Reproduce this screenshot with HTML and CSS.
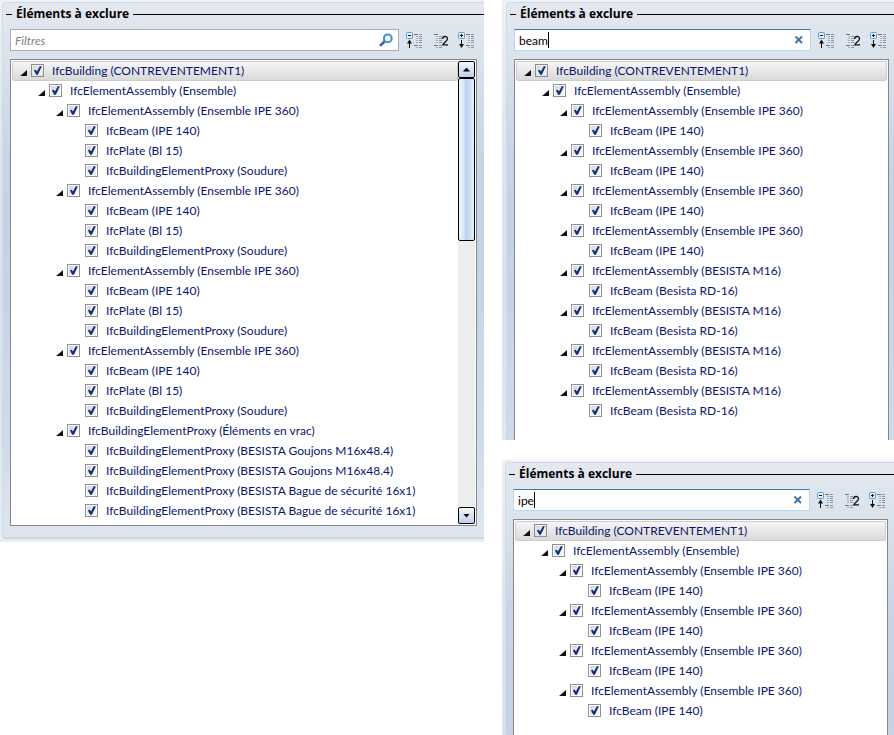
FILE: index.html
```html
<!DOCTYPE html>
<html lang="fr">
<head>
<meta charset="utf-8">
<title>Éléments à exclure</title>
<link rel="stylesheet" href="styles.css">
</head>
<body>
<svg class="defs" aria-hidden="true">
  <defs>
    <g id="lines" fill="none" stroke-width="1">
      <path d="M8 2.5h4M8 13.5h4" stroke="#6d7480"/>
      <path d="M10 4.5h2M10 6.5h2M10 8.5h2M10 10.5h2" stroke="#a3acba"/>
      <path d="M13 2.500h3M13 4.5h3M13 6.5h3M13 8.5h3M13 10.5h3M13 13.5h3M13 15.5h3" stroke="#8797a5"/>
      <path d="M10 15.5h2" stroke="#a3acba"/>
    </g>
    <symbol id="collapse" viewBox="0 -1 18 18">
      <rect x="0.5" y="0.5" width="6" height="6" rx="1" fill="#e4f0fa" stroke="#5c9bd3"/>
      <path d="M2 3.5h3" stroke="#111"/>
      <path d="M3.5 9v7" stroke="#111"/><path d="M3.5 7.5L6 11.5H1z" fill="#111"/>
      <use href="#lines"/>
    </symbol>
    <symbol id="level" viewBox="0 -1 18 18">
      <path d="M2 2.5h4M2 13.5h4" stroke="#6d7480"/>
      <path d="M4 4.5h2M4 6.5h2M4 8.5h2M4 10.5h2M4 15.5h2" stroke="#a3acba"/>
      <path d="M7 4.5h3M7 6.5h3M7 8.5h3M7 10.5h3M7 13.5h3M7 15.5h3" stroke="#8797a5"/>
      <path d="M10.6 7C10.6 3.700 15.500 3.700 15.500 6.700C15.500 9 11.400 10.500 10.800 12.900H16" fill="none" stroke="#111" stroke-width="1.300"/>
    </symbol>
    <symbol id="expand" viewBox="0 -1 18 18">
      <rect x="0.5" y="0.5" width="6" height="6" rx="1" fill="#e4f0fa" stroke="#5c9bd3"/>
      <path d="M2 3.5h3M3.5 2v3" stroke="#111"/>
      <path d="M3.5 8v6" stroke="#111"/><path d="M3.5 16L6 12H1z" fill="#111"/>
      <use href="#lines"/>
    </symbol>
    <symbol id="search" viewBox="0 0 14 14">
      <path d="M1.800 12.200L6 8" stroke="#3a5fb0" stroke-width="2.600" stroke-linecap="round"/>
      <circle cx="8.800" cy="5.400" r="3.900" fill="#f4faff" stroke="#3c8fd0" stroke-width="2"/>
    </symbol>
    <symbol id="clear" viewBox="0 0 14 14">
      <path d="M4.500 3.500l6.500 6.500M11 3.500L4.500 10" stroke="#3f72a4" stroke-width="1.800"/>
    </symbol>
  </defs>
</svg>

<main class="board">
  <section class="panel panel-full">
    <div class="group">
      <h2 class="title">Éléments à exclure</h2>
      <div class="toolbar">
        <div class="filter">
          <input type="text" class="filter-input" placeholder="Filtres" aria-label="Filtres">
          <button class="icon-btn"><svg class="glyph"><use href="#search"/></svg></button>
        </div>
        <button class="tool"><svg><use href="#collapse"/></svg></button>
        <button class="tool"><svg><use href="#level"/></svg></button>
        <button class="tool"><svg><use href="#expand"/></svg></button>
      </div>
      <div class="tree">
        <ul class="list">
          <li><div class="row selected"><button class="twisty"></button><label><input type="checkbox" checked>IfcBuilding (CONTREVENTEMENT1)</label></div>
            <ul>
              <li><div class="row"><button class="twisty"></button><label><input type="checkbox" checked>IfcElementAssembly (Ensemble)</label></div>
                <ul>
                  <li><div class="row"><button class="twisty"></button><label><input type="checkbox" checked>IfcElementAssembly (Ensemble IPE 360)</label></div>
                    <ul>
                      <li class="row leaf"><label><input type="checkbox" checked>IfcBeam (IPE 140)</label></li>
                      <li class="row leaf"><label><input type="checkbox" checked>IfcPlate (Bl 15)</label></li>
                      <li class="row leaf"><label><input type="checkbox" checked>IfcBuildingElementProxy (Soudure)</label></li>
                    </ul>
                  </li>
                  <li><div class="row"><button class="twisty"></button><label><input type="checkbox" checked>IfcElementAssembly (Ensemble IPE 360)</label></div>
                    <ul>
                      <li class="row leaf"><label><input type="checkbox" checked>IfcBeam (IPE 140)</label></li>
                      <li class="row leaf"><label><input type="checkbox" checked>IfcPlate (Bl 15)</label></li>
                      <li class="row leaf"><label><input type="checkbox" checked>IfcBuildingElementProxy (Soudure)</label></li>
                    </ul>
                  </li>
                  <li><div class="row"><button class="twisty"></button><label><input type="checkbox" checked>IfcElementAssembly (Ensemble IPE 360)</label></div>
                    <ul>
                      <li class="row leaf"><label><input type="checkbox" checked>IfcBeam (IPE 140)</label></li>
                      <li class="row leaf"><label><input type="checkbox" checked>IfcPlate (Bl 15)</label></li>
                      <li class="row leaf"><label><input type="checkbox" checked>IfcBuildingElementProxy (Soudure)</label></li>
                    </ul>
                  </li>
                  <li><div class="row"><button class="twisty"></button><label><input type="checkbox" checked>IfcElementAssembly (Ensemble IPE 360)</label></div>
                    <ul>
                      <li class="row leaf"><label><input type="checkbox" checked>IfcBeam (IPE 140)</label></li>
                      <li class="row leaf"><label><input type="checkbox" checked>IfcPlate (Bl 15)</label></li>
                      <li class="row leaf"><label><input type="checkbox" checked>IfcBuildingElementProxy (Soudure)</label></li>
                    </ul>
                  </li>
                  <li><div class="row"><button class="twisty"></button><label><input type="checkbox" checked>IfcBuildingElementProxy (Éléments en vrac)</label></div>
                    <ul>
                      <li class="row leaf"><label><input type="checkbox" checked>IfcBuildingElementProxy (BESISTA Goujons M16x48.4)</label></li>
                      <li class="row leaf"><label><input type="checkbox" checked>IfcBuildingElementProxy (BESISTA Goujons M16x48.4)</label></li>
                      <li class="row leaf"><label><input type="checkbox" checked>IfcBuildingElementProxy (BESISTA Bague de sécurité 16x1)</label></li>
                      <li class="row leaf"><label><input type="checkbox" checked>IfcBuildingElementProxy (BESISTA Bague de sécurité 16x1)</label></li>
                    </ul>
                  </li>
                </ul>
              </li>
            </ul>
          </li>
        </ul>
        <div class="scrollbar">
          <button class="scroll-btn up"></button>
          <div class="track"><div class="thumb"></div></div>
          <button class="scroll-btn down"></button>
        </div>
      </div>
    </div>
  </section>

  <div class="column">
    <section class="panel panel-cut">
      <div class="group">
        <h2 class="title">Éléments à exclure</h2>
        <div class="toolbar">
          <div class="filter active">
            <input type="text" class="filter-input" value="beam" aria-label="Filtres" autofocus>
            <button class="icon-btn"><svg class="glyph"><use href="#clear"/></svg></button>
            <span class="caret-line" aria-hidden="true"><span class="typed">beam</span></span>
          </div>
          <button class="tool"><svg><use href="#collapse"/></svg></button>
          <button class="tool"><svg><use href="#level"/></svg></button>
          <button class="tool"><svg><use href="#expand"/></svg></button>
        </div>
        <div class="tree">
          <ul class="list">
            <li><div class="row selected"><button class="twisty"></button><label><input type="checkbox" checked>IfcBuilding (CONTREVENTEMENT1)</label></div>
              <ul>
                <li><div class="row"><button class="twisty"></button><label><input type="checkbox" checked>IfcElementAssembly (Ensemble)</label></div>
                  <ul>
                    <li><div class="row"><button class="twisty"></button><label><input type="checkbox" checked>IfcElementAssembly (Ensemble IPE 360)</label></div>
                      <ul><li class="row leaf"><label><input type="checkbox" checked>IfcBeam (IPE 140)</label></li></ul></li>
                    <li><div class="row"><button class="twisty"></button><label><input type="checkbox" checked>IfcElementAssembly (Ensemble IPE 360)</label></div>
                      <ul><li class="row leaf"><label><input type="checkbox" checked>IfcBeam (IPE 140)</label></li></ul></li>
                    <li><div class="row"><button class="twisty"></button><label><input type="checkbox" checked>IfcElementAssembly (Ensemble IPE 360)</label></div>
                      <ul><li class="row leaf"><label><input type="checkbox" checked>IfcBeam (IPE 140)</label></li></ul></li>
                    <li><div class="row"><button class="twisty"></button><label><input type="checkbox" checked>IfcElementAssembly (Ensemble IPE 360)</label></div>
                      <ul><li class="row leaf"><label><input type="checkbox" checked>IfcBeam (IPE 140)</label></li></ul></li>
                    <li><div class="row"><button class="twisty"></button><label><input type="checkbox" checked>IfcElementAssembly (BESISTA M16)</label></div>
                      <ul><li class="row leaf"><label><input type="checkbox" checked>IfcBeam (Besista RD-16)</label></li></ul></li>
                    <li><div class="row"><button class="twisty"></button><label><input type="checkbox" checked>IfcElementAssembly (BESISTA M16)</label></div>
                      <ul><li class="row leaf"><label><input type="checkbox" checked>IfcBeam (Besista RD-16)</label></li></ul></li>
                    <li><div class="row"><button class="twisty"></button><label><input type="checkbox" checked>IfcElementAssembly (BESISTA M16)</label></div>
                      <ul><li class="row leaf"><label><input type="checkbox" checked>IfcBeam (Besista RD-16)</label></li></ul></li>
                    <li><div class="row"><button class="twisty"></button><label><input type="checkbox" checked>IfcElementAssembly (BESISTA M16)</label></div>
                      <ul><li class="row leaf"><label><input type="checkbox" checked>IfcBeam (Besista RD-16)</label></li></ul></li>
                  </ul>
                </li>
              </ul>
            </li>
          </ul>
        </div>
      </div>
    </section>

    <section class="panel panel-cut panel-narrow">
      <div class="group">
        <h2 class="title">Éléments à exclure</h2>
        <div class="toolbar">
          <div class="filter active">
            <input type="text" class="filter-input" value="ipe" aria-label="Filtres">
            <button class="icon-btn"><svg class="glyph"><use href="#clear"/></svg></button>
            <span class="caret-line" aria-hidden="true"><span class="typed">ipe</span></span>
          </div>
          <button class="tool"><svg><use href="#collapse"/></svg></button>
          <button class="tool"><svg><use href="#level"/></svg></button>
          <button class="tool"><svg><use href="#expand"/></svg></button>
        </div>
        <div class="tree">
          <ul class="list">
            <li><div class="row selected"><button class="twisty"></button><label><input type="checkbox" checked>IfcBuilding (CONTREVENTEMENT1)</label></div>
              <ul>
                <li><div class="row"><button class="twisty"></button><label><input type="checkbox" checked>IfcElementAssembly (Ensemble)</label></div>
                  <ul>
                    <li><div class="row"><button class="twisty"></button><label><input type="checkbox" checked>IfcElementAssembly (Ensemble IPE 360)</label></div>
                      <ul><li class="row leaf"><label><input type="checkbox" checked>IfcBeam (IPE 140)</label></li></ul></li>
                    <li><div class="row"><button class="twisty"></button><label><input type="checkbox" checked>IfcElementAssembly (Ensemble IPE 360)</label></div>
                      <ul><li class="row leaf"><label><input type="checkbox" checked>IfcBeam (IPE 140)</label></li></ul></li>
                    <li><div class="row"><button class="twisty"></button><label><input type="checkbox" checked>IfcElementAssembly (Ensemble IPE 360)</label></div>
                      <ul><li class="row leaf"><label><input type="checkbox" checked>IfcBeam (IPE 140)</label></li></ul></li>
                    <li><div class="row"><button class="twisty"></button><label><input type="checkbox" checked>IfcElementAssembly (Ensemble IPE 360)</label></div>
                      <ul><li class="row leaf"><label><input type="checkbox" checked>IfcBeam (IPE 140)</label></li></ul></li>
                  </ul>
                </li>
              </ul>
            </li>
          </ul>
        </div>
      </div>
    </section>
  </div>
</main>
</body>
</html>
```
FILE: styles.css
```css
* { box-sizing: border-box; }

body {
  margin: 0;
  background: #fff;
  color: #000;
  font: 12px/19px Lato, "Open Sans", sans-serif;
}

button { padding: 0; border: 0; background: none; }
.defs { display: none; }

.board {
  display: grid;
  grid-template-columns: 484fr 392fr;
  column-gap: 18px;
  align-items: start;
}
.column { display: grid; row-gap: 20px; }

/* Panels */
.panel {
  padding: 2px 0 3px 2px;
  background: linear-gradient(#ebf1f6, #dbe6f2 150px, #d6e2f0 300px, #e6edf5 542px);
}
.group {
  padding: 2px 7px 11px 7px;
  border: 1px solid #d3dae2;
  border-right: 0;
  border-bottom: 2px solid #cbd5e0;
  border-radius: 4px 0 0 4px;
  background: linear-gradient(#e4e8f0, #dbe3ec 50px, #c8d5e5 150px, #c4d2e5 240px, #cfdae8 430px, #dfe6ef 535px);
}
.panel-cut { padding: 2px 0 0 4px; }
.panel-cut .group {
  padding: 2px 5px 0 7px;
  border-bottom: 0;
  border-radius: 4px 0 0 0;
}
.panel-cut .tree { border-bottom: 0; padding-bottom: 16px; }
.panel-cut.panel-narrow { padding-left: 3px; }
.panel-narrow .group { padding-right: 6px; }
.panel-narrow .tree { padding-bottom: 14px; }

.title {
  display: flex;
  align-items: center;
  gap: 4px;
  margin: 0 -7px 0 -4px;
  font-family: "Open Sans", sans-serif;
  font-size: 12px;
  font-weight: 700;
  line-height: 18px;
}
.title::before,
.title::after { content: ""; height: 1px; background: #000; }
.title::before { width: 6px; }
.title::after { flex: 1; }

/* Filter bar */
.toolbar {
  display: flex;
  align-items: center;
  gap: 8px;
  margin: 6px 1px 8px 0;
}
.filter {
  position: relative;
  display: flex;
  align-items: center;
  flex: 1;
  height: 22px;
  margin-right: -1px;
  padding: 0 5px 0 4px;
  border: 1px solid #abadb3;
  background: #fff;
}
.filter.active {
  border-color: #3d7bad #b5daf0 #b5daf0;
}
.filter-input {
  flex: 1;
  min-width: 0;
  padding: 0;
  border: 0;
  outline: 0;
  background: none;
  color: #000;
  caret-color: transparent;
  font: inherit;
}
.filter-input::placeholder { color: #808080; font-style: italic; opacity: 1; }
.caret-line {
  position: absolute;
  left: 4px;
  top: 2px;
  height: 16px;
  border-right: 1px solid #000;
  pointer-events: none;
}
.typed { visibility: hidden; }
.icon-btn, .glyph { display: block; width: 14px; height: 14px; }
.tool, .tool svg { display: block; width: 18px; height: 18px; }

/* Tree */
.tree {
  display: flex;
  padding: 1px;
  border: 1px solid #828790;
  background: #fff;
}
ul { margin: 0; padding: 0 0 0 18px; list-style: none; }
.list { flex: 1; padding: 0 0 3px; }
.row {
  display: flex;
  align-items: center;
  height: 20px;
  padding: 0 0 1px 8px;
  color: #0b1470;
  white-space: nowrap;
}
.selected {
  padding: 0 0 1px 7px;
  border: 1px solid #cdcdcd;
  border-radius: 2px;
  background: linear-gradient(#f5f5f5, #d9d9d9);
}
.leaf { padding-left: 19px; }
.twisty {
  width: 7px;
  height: 6px;
  margin: 5px 4px 0 0;
  background: linear-gradient(135deg, #a0a0a0, #111 60%);
  clip-path: polygon(100% 0, 100% 100%, 0 100%);
}
label { display: flex; align-items: center; gap: 8px; }
input[type="checkbox"] {
  appearance: none;
  width: 13px;
  height: 13px;
  margin: 0;
  padding: 1px;
  border: 1px solid #8e8f8f;
  background: linear-gradient(135deg, #d3d7dd, #f6f6f6) content-box #f4f4f4;
}
input[type="checkbox"]:checked::before {
  content: "";
  display: block;
  width: 9px;
  height: 9px;
  background: #12297c;
  clip-path: polygon(10% 48%, 30% 42%, 44% 62%, 76% 4%, 98% 4%, 54% 98%, 36% 98%);
}

/* Scroll bar */
.scrollbar {
  display: flex;
  flex-direction: column;
  width: 17px;
  background: #ededed;
}
.scroll-btn {
  display: grid;
  place-items: center;
  height: 17px;
  border: 1px solid #000;
  border-radius: 2px;
  background: linear-gradient(#f2f8fd, #d7e4f4 50%, #bfd2ec);
}
.scroll-btn::before {
  content: "";
  width: 7px;
  height: 4px;
  background: #000;
}
.up::before { clip-path: polygon(50% 0, 100% 100%, 0 100%); }
.down::before { clip-path: polygon(0 0, 100% 0, 50% 100%); }
.track { flex: 1; }
.thumb {
  height: 38%;
  border: 1px solid #000;
  border-radius: 2px;
  background: linear-gradient(90deg, #edf6fc, #d4e6f6 35%, #bbd0ec 45%, #d2e4f6 80%, #e6f2fb);
}
```
